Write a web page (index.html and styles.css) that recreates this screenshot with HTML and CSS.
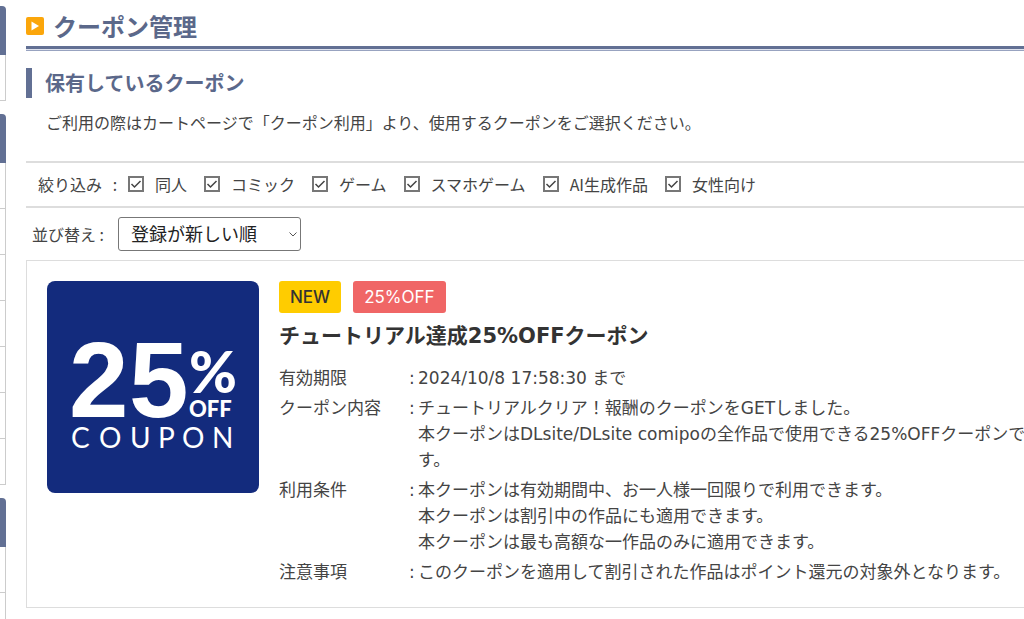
FILE: index.html
```html
<!DOCTYPE html>
<html lang="ja">
<head>
    <meta charset="UTF-8">
    <meta name="viewport" content="width=device-width, initial-scale=1">
    <title>クーポン管理</title>
    <link rel="stylesheet" href="styles.css">
</head>
<body>

<div class="page">
    <div class="side">
        <div class="side_box">
            <div class="side_head"></div>
            <ul class="side_list"><li></li></ul>
        </div>
        <div class="side_box">
            <div class="side_head"></div>
            <ul class="side_list"><li></li><li></li><li></li><li></li><li></li><li></li><li></li></ul>
        </div>
        <div class="side_box">
            <div class="side_head"></div>
            <ul class="side_list"><li></li></ul>
        </div>
    </div>

    <main class="main">
        <h1 class="page_title">
            <svg class="title_icon" viewBox="0 0 18 18" aria-hidden="true">
                <rect width="18" height="18" rx="2" fill="#fba60b"/>
                <path d="M5.5 4.5 L13 9 L5.5 13.5 Z" fill="#fff"/>
            </svg>
            クーポン管理
        </h1>

        <h2 class="section_title">保有しているクーポン</h2>
        <p class="lead">ご利用の際はカートページで「クーポン利用」より、使用するクーポンをご選択ください。</p>

        <div class="filter">
            <span class="filter_label">絞り込み</span>
            <span class="filter_colon">:</span>
            <label><input type="checkbox" checked>同人</label>
            <label><input type="checkbox" checked>コミック</label>
            <label><input type="checkbox" checked>ゲーム</label>
            <label><input type="checkbox" checked>スマホゲーム</label>
            <label><input type="checkbox" checked>AI生成作品</label>
            <label><input type="checkbox" checked>女性向け</label>
        </div>

        <div class="sort">
            <label for="order">並び替え :</label>
            <select id="order">
                <option>登録が新しい順</option>
            </select>
        </div>

        <section class="coupon">
            <svg class="coupon_img" viewBox="0 0 212 212" role="img" aria-label="25% OFF COUPON">
                <rect width="212" height="212" rx="8" fill="#132b7d"/>
                <g fill="#fff">
                    <text class="logo_num" x="22 82" y="136">25</text>
                    <text class="logo_percent" x="142" y="112">%</text>
                    <text class="logo_off" x="142" y="136">OFF</text>
                    <text class="logo_coupon" x="24 52 83 111 135 165" y="167">COUPON</text>
                </g>
            </svg>
            <div class="coupon_body">
                <div class="badges">
                    <span class="badge badge_new">NEW</span>
                    <span class="badge badge_off">25%OFF</span>
                </div>
                <h3 class="coupon_title">チュートリアル達成25%OFFクーポン</h3>
                <dl class="detail">
                    <dt>有効期限</dt>
                    <dd>2024/10/8 17:58:30 まで</dd>
                    <dt>クーポン内容</dt>
                    <dd>チュートリアルクリア！報酬のクーポンをGETしました。<br>本クーポンはDLsite/DLsite comipoの全作品で使用できる25%OFFクーポンです。</dd>
                    <dt>利用条件</dt>
                    <dd>本クーポンは有効期間中、お一人様一回限りで利用できます。<br>本クーポンは割引中の作品にも適用できます。<br>本クーポンは最も高額な一作品のみに適用できます。</dd>
                    <dt>注意事項</dt>
                    <dd>このクーポンを適用して割引された作品はポイント還元の対象外となります。</dd>
                </dl>
            </div>
        </section>
    </main>
</div>

</body>
</html>
```
FILE: styles.css
```css
* { box-sizing: border-box; }
body,h1,h2,h3,p,ul,dl,dd { margin: 0; padding: 0; }
body {
    background: #fff;
    color: #444;
    font-family: "Noto Sans CJK JP", sans-serif;
    font-size: 16px;
    line-height: 24px;
}
.page {
    display: flex;
    min-height: 100vh;
    padding-top: 6px;
    overflow: hidden;
}

/* side menu */
.side {
    display: flex;
    flex-direction: column;
    gap: 13px;
    flex: none;
    width: 6px;
}
.side_head {
    height: 49px;
    background: #627094;
    border-top-right-radius: 4px;
}
.side_list {
    list-style: none;
    border-right: 1px solid #ccc;
}
.side_list li {
    height: 46px;
    border-bottom: 1px solid #ccc;
}
.side_box:last-child {
    display: flex;
    flex-direction: column;
    flex: 1;
}
.side_box:last-child .side_list {
    flex: 1;
}

/* the content column runs on past the right edge of the window */
.main {
    flex: 1;
    min-width: 0;
    margin: 0 -32px 0 20px;
}
.page_title {
    display: flex;
    align-items: center;
    gap: 9px;
    height: 43px;
    border-bottom: 3px solid #627094;
    box-shadow: 0 1px #dfe3ee, 0 2px #98a3c0;
    color: #5b688a;
    font-size: 24px;
    font-weight: 700;
    line-height: 36px;
}
.title_icon {
    width: 18px;
    height: 18px;
}
.section_title {
    margin-top: 19px;
    padding-left: 13px;
    border-left: 6px solid #627094;
    color: #5b688a;
    font-size: 20px;
    font-weight: 700;
    line-height: 30px;
}
.lead {
    padding: 12px 20px 27px;
}

.filter {
    display: flex;
    align-items: center;
    height: 47px;
    padding: 0 0 2px 12px;
    border-top: 2px solid #ddd;
    border-bottom: 2px solid #ddd;
}
.filter_colon {
    width: 26px;
    text-align: center;
}
.filter label {
    display: flex;
    align-items: center;
    gap: 11px;
    margin-right: 17px;
}
.filter input {
    appearance: none;
    width: 16px;
    height: 16px;
    margin: 0;
    border: 2px solid #777;
    background: #fff;
}
.filter input:checked {
    background: url("data:image/svg+xml,%3Csvg xmlns='http://www.w3.org/2000/svg' viewBox='0 0 12 12'%3E%3Cpath d='M1.5 6 L4.5 9 L10.5 3' fill='none' stroke='%23444' stroke-width='1.5'/%3E%3C/svg%3E") center / 12px 12px no-repeat;
}

.sort {
    display: flex;
    align-items: center;
    gap: 14px;
    padding: 9px 6px;
}
.sort select {
    appearance: none;
    width: 183px;
    height: 34px;
    padding: 0 12px 2px;
    border: 1px solid #777;
    border-radius: 3px;
    background: #fff url("data:image/svg+xml,%3Csvg xmlns='http://www.w3.org/2000/svg' viewBox='0 0 8 5'%3E%3Cpath d='M0.5 0.5 L4 4 L7.5 0.5' fill='none' stroke='%23555'/%3E%3C/svg%3E") right 3px center / 8px 5px no-repeat;
    color: #222;
    font-family: inherit;
    font-size: 18px;
}

.coupon {
    display: flex;
    align-items: flex-start;
    gap: 20px;
    padding: 20px 20px 22px;
    border: 1px solid #ddd;
}
.coupon_img {
    flex: none;
    width: 212px;
    height: 212px;
}
.logo_num {
    font: bold 107px "Liberation Sans", sans-serif;
}
.logo_percent {
    font: 900 58px Lato, sans-serif;
}
.logo_off {
    font: 900 22px Lato, sans-serif;
}
.logo_coupon {
    font: 28px Lato, sans-serif;
}
.coupon_body {
    flex: 1;
    min-width: 0;
    font-family: "DejaVu Sans", "Noto Sans CJK JP", sans-serif;
}
.badges {
    display: flex;
    gap: 12px;
}
.badge {
    padding: 0 11px;
    border-radius: 3px;
    font-family: Inter, sans-serif;
    font-size: 17px;
    line-height: 32px;
}
.badge_new {
    background: #fc0;
    color: #333;
    font-weight: 500;
}
.badge_off {
    background: #f06666;
    color: #fff;
}
.coupon_title {
    margin: 7px 0 13px;
    color: #333;
    font-size: 21px;
    font-weight: 700;
    line-height: 32px;
}
.detail {
    display: grid;
    grid-template-columns: 130px 1fr;
    row-gap: 4px;
    font-size: 17px;
    line-height: 26px;
}
.detail dd {
    padding-left: 9px;
    text-indent: -9px;
}
.detail dd::before {
    content: ":";
    display: inline-block;
    width: 9px;
    text-indent: 0;
}
```
